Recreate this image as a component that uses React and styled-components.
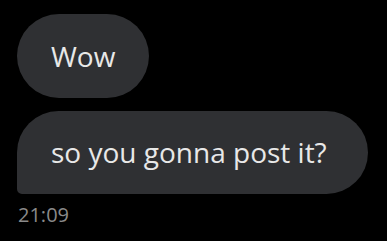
import React from 'react'
import styled, { createGlobalStyle } from 'styled-components'

const GlobalStyle = createGlobalStyle`
  html, body {
    margin: 0;
    background: #000;
  }
  body {
    font-family: "Open Sans", "Noto Sans", sans-serif;
  }
`

const Thread = styled.div`
  display: flex;
  flex-direction: column;
  align-items: flex-start;
  gap: 13px;
  padding: 14px 19px 0 17px;
  width: 387px;
  height: 241px;
  box-sizing: border-box;
`

const Group = styled.div`
  align-self: stretch;
  display: flex;
  flex-direction: column;
  align-items: flex-start;
`

const Bubble = styled.div`
  display: flex;
  align-items: center;
  height: 84px;
  box-sizing: border-box;
  padding: 0 34px 1px 34px;
  background: #2f3033;
  color: #e8e8e8;
  font-size: 28px;
  border-radius: 42px;
  ${({ last }) => last && 'border-bottom-left-radius: 5px; align-self: stretch; height: 83px;'}
`

const Time = styled.div`
  margin-top: 7px;
  margin-left: 1px;
  color: #8a8a8a;
  font-size: 20px;
`

export default function App () {
  return (
    <>
      <GlobalStyle />
      <Thread>
        <Bubble>Wow</Bubble>
        <Group>
          <Bubble last>so you gonna post it?</Bubble>
          <Time>21:09</Time>
        </Group>
      </Thread>
    </>
  )
}
